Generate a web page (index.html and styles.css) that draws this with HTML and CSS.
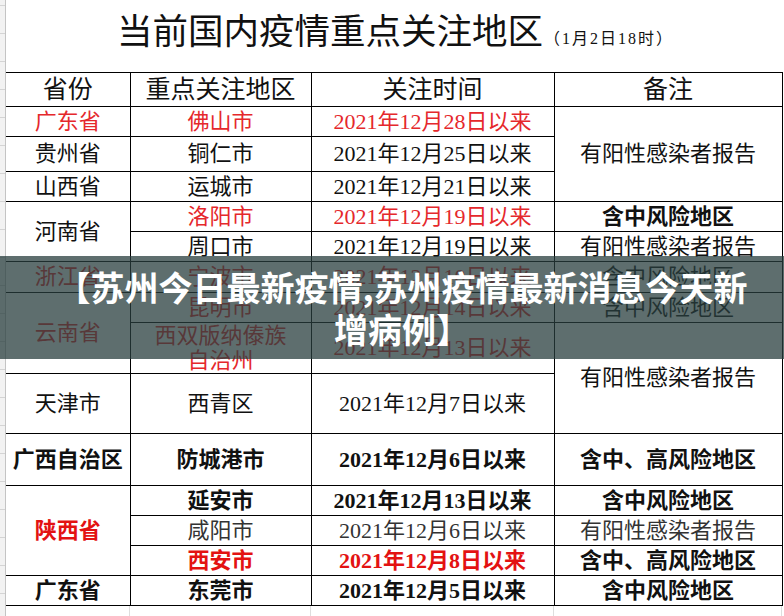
FILE: index.html
```html
<!DOCTYPE html>
<html lang="zh-CN">
<head>
<meta charset="utf-8">
<title>当前国内疫情重点关注地区</title>
<link rel="stylesheet" href="styles.css">
</head>
<body>
<div class="page">
  <div class="rowhead"></div>
  <div class="sheet">
    <div class="title">
      <span class="title-main">当前国内疫情重点关注地区</span>
      <span class="title-sub">（1月2日18时）</span>
    </div>
    <table class="grid">
      <colgroup><col class="c1"><col class="c2"><col class="c3"><col class="c4"></colgroup>
      <tr class="r-head"><th>省份</th><th>重点关注地区</th><th>关注时间</th><th>备注</th></tr>
      <tr class="r30"><td class="red">广东省</td><td class="red">佛山市</td><td class="red">2021年12月28日以来</td><td rowspan="3">有阳性感染者报告</td></tr>
      <tr class="r35"><td>贵州省</td><td>铜仁市</td><td>2021年12月25日以来</td></tr>
      <tr class="r30"><td>山西省</td><td>运城市</td><td>2021年12月21日以来</td></tr>
      <tr class="r30"><td rowspan="2">河南省</td><td class="red">洛阳市</td><td class="red">2021年12月19日以来</td><td class="b">含中风险地区</td></tr>
      <tr class="r30"><td>周口市</td><td>2021年12月19日以来</td><td>有阳性感染者报告</td></tr>
      <tr class="r31"><td class="red">浙江省</td><td class="red">宁波市</td><td class="red">2021年12月10日以来</td><td>含中风险地区</td></tr>
      <tr class="r30"><td rowspan="2" class="red">云南省</td><td class="red">昆明市</td><td class="red">2021年12月14日以来</td><td>含中风险地区</td></tr>
      <tr class="r51"><td class="red two">西双版纳傣族<br>自治州</td><td class="red">2021年12月13日以来</td><td rowspan="2">有阳性感染者报告</td></tr>
      <tr class="r60"><td>天津市</td><td>西青区</td><td>2021年12月7日以来</td></tr>
      <tr class="r52"><td class="b">广西自治区</td><td class="b">防城港市</td><td class="b">2021年12月6日以来</td><td class="b">含中、高风险地区</td></tr>
      <tr class="r30"><td rowspan="3" class="b red">陕西省</td><td class="b">延安市</td><td class="b">2021年12月13日以来</td><td class="b">含中风险地区</td></tr>
      <tr class="r30"><td class="soft">咸阳市</td><td class="soft">2021年12月6日以来</td><td class="soft">有阳性感染者报告</td></tr>
      <tr class="r30"><td class="b red">西安市</td><td class="b red">2021年12月8日以来</td><td class="b">含中、高风险地区</td></tr>
      <tr class="r30"><td class="b">广东省</td><td class="b">东莞市</td><td class="b">2021年12月5日以来</td><td class="b">含中风险地区</td></tr>
    </table>
    <div class="below"><span></span><span></span><span></span><span></span></div>
  </div>
  <div class="banner">【苏州今日最新疫情,苏州疫情最新消息今天新<br>增病例】</div>
</div>
</body>
</html>
```

FILE: styles.css
```css
html, body {
  margin: 0;
  padding: 0;
  background: #ffffff;
}

.page {
  position: relative;
  width: 784px;
  height: 616px;
  overflow: hidden;
  display: flex;
  background: #ffffff;
}

.rowhead {
  flex: 0 0 5px;
  border-right: 1px solid #c4c4c4;
  background-color: #f2f2f2;
  background-image: repeating-linear-gradient(to bottom, transparent 0, transparent 5px, #d4d4d4 5px, #d4d4d4 6px, transparent 6px, transparent 28px);
}

.sheet {
  flex: 0 0 778px;
  display: flex;
  flex-direction: column;
}

.title {
  height: 72px;
  box-sizing: border-box;
  padding: 15px 0 0 111px;
  display: flex;
  justify-content: flex-start;
  align-items: baseline;
  gap: 1px;
  color: #111;
  font-family: "Liberation Serif", "Noto Sans CJK SC", serif;
}

.title-main {
  font-size: 35.5px;
  line-height: 35px;
}

.title-sub {
  font-size: 16px;
  line-height: 16px;
  letter-spacing: 2px;
}

.grid {
  width: 776px;
  border-collapse: collapse;
  table-layout: fixed;
  font-family: "Liberation Serif", "Noto Sans CJK SC", serif;
  font-size: 22px;
  color: #111;
}

.c1 { width: 124px; }
.c2 { width: 181px; }
.c3 { width: 243px; }
.c4 { width: 228px; }

.grid th,
.grid td {
  border: 1px solid #000;
  padding: 0;
  text-align: center;
  vertical-align: middle;
  line-height: 24px;
  white-space: nowrap;
}

.grid tr > :first-child {
  border-left: none;
}

.grid tr > td[rowspan] + td,
.grid tr > td:not(:first-child) {
  border-left-width: 1px;
}

.grid th {
  font-weight: normal;
  font-size: 25px;
}

.r-head { height: 34px; }
.r30 { height: 30px; }
.r31 { height: 31px; }
.r35 { height: 35px; }
.r51 { height: 51px; }
.r52 { height: 52px; }
.r60 { height: 60px; }

.grid td.two {
  line-height: 25px;
}

.red { color: #e5282c; }
.grid td.b { font-weight: 700; }
.grid td.b.red { color: #e31212; }
.soft { color: #333; }

.below {
  flex: 1;
  display: grid;
  grid-template-columns: 124px 181px 243px 228px;
}

.below span {
  border-right: 1px solid #dedede;
}

.banner {
  position: absolute;
  left: 0;
  right: 0;
  top: 256px;
  height: 103px;
  box-sizing: border-box;
  padding: 10px 0 0 20px;
  background: rgba(40, 62, 62, 0.75);
  color: #ffffff;
  font-family: "Noto Sans CJK SC", "Liberation Sans", sans-serif;
  font-weight: 700;
  font-size: 34px;
  line-height: 42px;
  text-align: center;
  white-space: nowrap;
}
```
